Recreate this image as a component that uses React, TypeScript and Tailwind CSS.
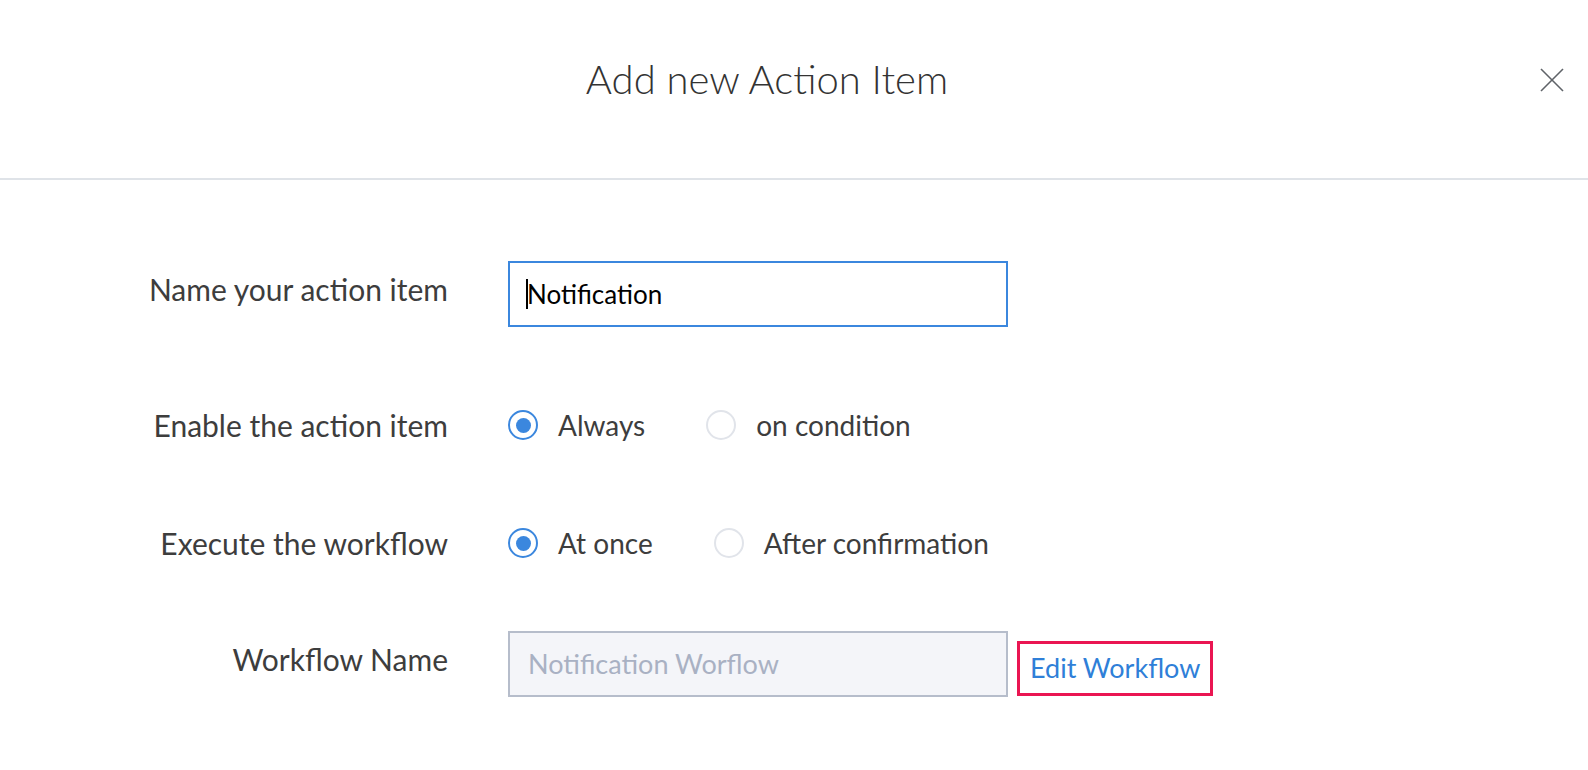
import React from 'react';

const Radio = ({ checked, label }: { checked: boolean; label: string }) => (
    <label className="flex items-center mr-[61px] cursor-pointer">
        <span
            className={
                checked
                    ? 'w-[30px] h-[30px] rounded-full border-2 border-[#3b87de] flex items-center justify-center'
                    : 'w-[30px] h-[30px] rounded-full border-2 border-[#e1e4ea] flex items-center justify-center'
            }
        >
            {checked && <span className="w-[15px] h-[15px] rounded-full bg-[#3b87de]"></span>}
        </span>
        <span className="ml-[20px] text-[28px] text-[#3d3d3d]">{label}</span>
    </label>
);

const Row = ({ label, children, className, offset }: { label: string; children: React.ReactNode; className?: string; offset?: boolean }) => (
    <div className={`flex items-center ${className ?? ''}`}>
        <div className={`w-[448px] text-right text-[30px] text-[#3d3d3d] ${offset ? '-mt-[10px]' : ''}`}>{label}</div>
        <div className="ml-[60px] flex items-center">{children}</div>
    </div>
);

const App = () => {
    return (
        <div className="w-[1588px] h-[770px] bg-white font-['Lato',sans-serif]">
            {/* Header */}
            <header className="relative h-[180px] border-b-2 border-[#dfe3e8] flex justify-center pr-[54px]">
                <h1 className="pt-[55px] text-[40px] leading-[48px] font-light text-[#333333]">Add new Action Item</h1>
                <button className="absolute right-[24px] top-[68px] w-[24px] h-[24px] text-[#5f6368]">
                    <svg viewBox="0 0 24 24" width="24" height="24" stroke="currentColor" strokeWidth="1.6" fill="none">
                        <line x1="1" y1="1" x2="23" y2="23" />
                        <line x1="23" y1="1" x2="1" y2="23" />
                    </svg>
                </button>
            </header>

            <div className="pt-[81px]">
                <Row label="Name your action item" offset>
                    <div className="w-[500px] h-[66px] border-2 border-[#3b87de] flex items-center pl-[16px]">
                        <span className="w-[2px] h-[30px] bg-black"></span>
                        <span className="text-[26px] text-black -ml-[1px]">Notification</span>
                    </div>
                </Row>

                <Row label="Enable the action item" className="mt-[78px] h-[40px]">
                    <Radio checked label="Always" />
                    <Radio checked={false} label="on condition" />
                </Row>

                <Row label="Execute the workflow" className="mt-[78px] h-[40px]">
                    <Radio checked label="At once" />
                    <Radio checked={false} label="After confirmation" />
                </Row>

                <Row label="Workflow Name" className="mt-[68px]" offset>
                    <div className="w-[500px] h-[66px] border-2 border-[#b6bdcb] bg-[#f4f5f9] flex items-center pl-[18px]">
                        <span className="text-[27px] text-[#a9b1c3]">Notification Worflow</span>
                    </div>
                    <a className="ml-[9px] mt-[9px] h-[55px] px-[10px] border-[3px] border-[#ea1652] flex items-center text-[27px] text-[#2f7fd8]">
                        Edit Workflow
                    </a>
                </Row>
            </div>
        </div>
    );
};

export default App;
